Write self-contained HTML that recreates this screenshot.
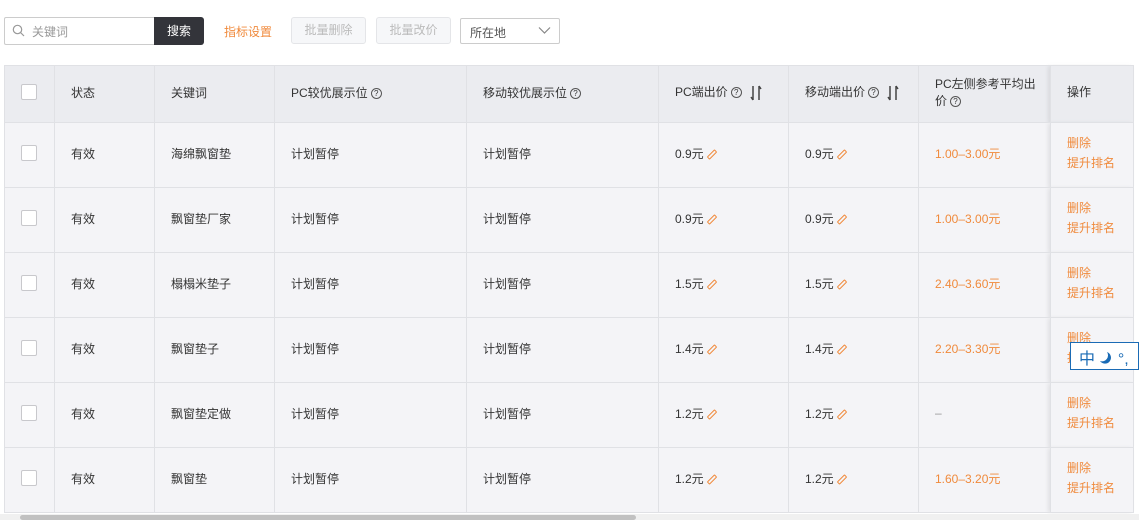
<!DOCTYPE html>
<html><head><meta charset="utf-8"><style>
*{margin:0;padding:0;box-sizing:border-box}
body{width:1139px;height:520px;overflow:hidden;background:#fff;font-family:"Liberation Sans","Noto Sans CJK SC",sans-serif;font-size:12px;color:#333;position:relative}
.abs{position:absolute}
.search{left:4px;top:17px;width:150px;height:28px;border:1px solid #ccc;border-right:none;border-radius:2px 0 0 2px;color:#999;padding:5px 0 0 27px}
.btn{left:154px;top:17px;width:50px;height:28px;background:#33343a;color:#fff;border-radius:0 3px 3px 0;text-align:center;line-height:28px}
.dis{top:17px;height:27px;border:1px solid #e4e5e8;background:#f6f7f9;color:#bbb;border-radius:3px;text-align:center;line-height:25px;width:75px}
.sel{left:460px;top:18px;width:100px;height:26px;border:1px solid #ccc;border-radius:2px;color:#555;padding:5px 0 0 9px}
table{position:absolute;left:4px;top:65px;border-collapse:collapse;width:1129px;table-layout:fixed}
td,th{border:1px solid #e0e1e5;font-weight:normal;text-align:left;padding-left:16px;padding-bottom:4px;height:65px;background:#f4f4f7}
th{background:#ebecf0;height:57px}
.ck{display:inline-block;width:16px;height:16px;border:1px solid #c8c8cc;border-radius:2px;background:#fff;vertical-align:middle}
.q{display:inline-block;width:11px;height:11px;border:1px solid #555;border-radius:50%;font-size:8px;line-height:9px;text-align:center;vertical-align:middle;margin-left:3px}
.or{color:#f08a3c}
.op{box-shadow:-3px 0 4px rgba(0,0,0,.08);line-height:20px}
.pen{display:inline-block;width:4px;height:11px;border:1.5px solid #f08a3c;transform:rotate(45deg);border-radius:1px;margin-left:6px;vertical-align:middle}
.sort{display:inline-block;margin-left:8px;vertical-align:middle}
</style></head><body>
<div class="abs search">关键词</div>
<svg class="abs" style="left:12px;top:24px" width="13" height="13"><circle cx="5.5" cy="5.5" r="4.2" fill="none" stroke="#999" stroke-width="1.2"/><path d="M8.5 8.5L12 12" stroke="#999" stroke-width="1.2"/></svg>
<div class="abs btn">搜索</div>
<div class="abs or" style="left:224px;top:23px">指标设置</div>
<div class="abs dis" style="left:291px">批量删除</div>
<div class="abs dis" style="left:376px">批量改价</div>
<div class="abs sel">所在地</div>
<svg class="abs" style="left:538px;top:26px" width="13" height="9"><path d="M1 1.5L6.5 7L12 1.5" fill="none" stroke="#888" stroke-width="1.2"/></svg>
<table>
<colgroup><col style="width:50px"><col style="width:100px"><col style="width:120px"><col style="width:192px"><col style="width:192px"><col style="width:130px"><col style="width:130px"><col style="width:132px"><col style="width:83px"></colgroup>
<tr><th><span class="ck"></span></th><th>状态</th><th>关键词</th><th>PC较优展示位<span class="q">?</span></th><th>移动较优展示位<span class="q">?</span></th><th>PC端出价<span class="q">?</span><svg class="sort" width="12" height="16"><path d="M3 1V15M3 15L1 12M9 15V1M9 1L11 4" fill="none" stroke="#444" stroke-width="1.5"/></svg></th><th>移动端出价<span class="q">?</span><svg class="sort" width="12" height="16"><path d="M3 1V15M3 15L1 12M9 15V1M9 1L11 4" fill="none" stroke="#444" stroke-width="1.5"/></svg></th><th>PC左侧参考平均出<br>价<span class="q">?</span></th><th class="op">操作</th></tr>
<tr><td><span class="ck"></span></td><td>有效</td><td>海绵飘窗垫</td><td>计划暂停</td><td>计划暂停</td><td>0.9元<span class="pen"></span></td><td>0.9元<span class="pen"></span></td><td class="or">1.00–3.00元</td><td class="or op">删除<br>提升排名</td></tr>
<tr><td><span class="ck"></span></td><td>有效</td><td>飘窗垫厂家</td><td>计划暂停</td><td>计划暂停</td><td>0.9元<span class="pen"></span></td><td>0.9元<span class="pen"></span></td><td class="or">1.00–3.00元</td><td class="or op">删除<br>提升排名</td></tr>
<tr><td><span class="ck"></span></td><td>有效</td><td>榻榻米垫子</td><td>计划暂停</td><td>计划暂停</td><td>1.5元<span class="pen"></span></td><td>1.5元<span class="pen"></span></td><td class="or">2.40–3.60元</td><td class="or op">删除<br>提升排名</td></tr>
<tr><td><span class="ck"></span></td><td>有效</td><td>飘窗垫子</td><td>计划暂停</td><td>计划暂停</td><td>1.4元<span class="pen"></span></td><td>1.4元<span class="pen"></span></td><td class="or">2.20–3.30元</td><td class="or op">删除<br>提升排名</td></tr>
<tr><td><span class="ck"></span></td><td>有效</td><td>飘窗垫定做</td><td>计划暂停</td><td>计划暂停</td><td>1.2元<span class="pen"></span></td><td>1.2元<span class="pen"></span></td><td style="color:#999">–</td><td class="or op">删除<br>提升排名</td></tr>
<tr><td><span class="ck"></span></td><td>有效</td><td>飘窗垫</td><td>计划暂停</td><td>计划暂停</td><td>1.2元<span class="pen"></span></td><td>1.2元<span class="pen"></span></td><td class="or">1.60–3.20元</td><td class="or op">删除<br>提升排名</td></tr>
</table>
<div class="abs" style="left:1070px;top:342px;width:69px;height:28px;background:#fff;border:1px solid #1a6bb5;color:#1a6bb5;font-size:16px;padding:2px 0 0 8px">中 <svg width="14" height="14" style="vertical-align:-1px"><path d="M8 1A6 6 0 1 1 1 10A6 6 0 0 0 8 1Z" fill="#1a6bb5"/></svg> °,</div>
<div class="abs" style="left:0;top:514px;width:1139px;height:6px;background:#f0f0f0"></div>
<div class="abs" style="left:20px;top:515px;width:616px;height:5px;background:#c1c1c1;border-radius:3px"></div>
</body></html>
